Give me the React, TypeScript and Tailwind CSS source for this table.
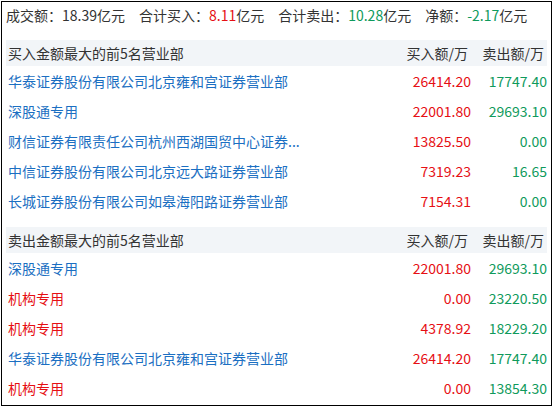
const RED = "text-[#e60f14]";
const GREEN = "text-[#0f9a5c]";

type Row = { name: string; buy: string; sell: string; inst?: boolean };

const buyRows: Row[] = [
  { name: "华泰证券股份有限公司北京雍和宫证券营业部", buy: "26414.20", sell: "17747.40" },
  { name: "深股通专用", buy: "22001.80", sell: "29693.10" },
  { name: "财信证券有限责任公司杭州西湖国贸中心证券...", buy: "13825.50", sell: "0.00" },
  { name: "中信证券股份有限公司北京远大路证券营业部", buy: "7319.23", sell: "16.65" },
  { name: "长城证券股份有限公司如皋海阳路证券营业部", buy: "7154.31", sell: "0.00" },
];

const sellRows: Row[] = [
  { name: "深股通专用", buy: "22001.80", sell: "29693.10" },
  { name: "机构专用", buy: "0.00", sell: "23220.50", inst: true },
  { name: "机构专用", buy: "4378.92", sell: "18229.20", inst: true },
  { name: "华泰证券股份有限公司北京雍和宫证券营业部", buy: "26414.20", sell: "17747.40" },
  { name: "机构专用", buy: "0.00", sell: "13854.30", inst: true },
];

const SectionHead = ({ title }: { title: string }) => (
  <div className="flex items-center h-[26px] bg-[#f2f5f8] text-[#333]">
    <div className="flex-1 pl-[2px]">{title}</div>
    <div className="w-[90px] text-right pr-[3px]">买入额/万</div>
    <div className="w-[76px] text-right pr-[3px]">卖出额/万</div>
  </div>
);

const DeptRow = ({ row }: { row: Row }) => (
  <div className="flex items-center h-[30px]">
    <div className={`flex-1 min-w-0 pl-[2px] whitespace-nowrap ${row.inst ? RED : "text-[#1b6fc2]"}`}>
      {row.name}
    </div>
    <div className={`w-[90px] text-right ${RED}`}>{row.buy}</div>
    <div className={`w-[76px] text-right ${GREEN}`}>{row.sell}</div>
  </div>
);

export default function App() {
  return (
    <div className="bg-white w-[555px] h-[409px] pt-px pl-px">
      <div
        className="w-[551px] h-[405px] border border-black px-[4px] text-[14px] leading-[20px] text-[#333]"
        style={{ fontFamily: '"Noto Sans CJK SC", "Noto Sans", sans-serif' }}
      >
        <div className="flex items-center h-[26px] gap-[14px]">
          <span>成交额：18.39亿元</span>
          <span>
            合计买入：<span className={RED}>8.11</span>亿元
          </span>
          <span>
            合计卖出：<span className={GREEN}>10.28</span>亿元
          </span>
          <span>
            净额：<span className={GREEN}>-2.17</span>亿元
          </span>
        </div>

        <div className="mt-[12px]">
          <SectionHead title="买入金额最大的前5名营业部" />
          {buyRows.map((r, i) => (
            <DeptRow key={i} row={r} />
          ))}
        </div>

        <div className="mt-[11px]">
          <SectionHead title="卖出金额最大的前5名营业部" />
          {sellRows.map((r, i) => (
            <DeptRow key={i} row={r} />
          ))}
        </div>
      </div>
    </div>
  );
}
